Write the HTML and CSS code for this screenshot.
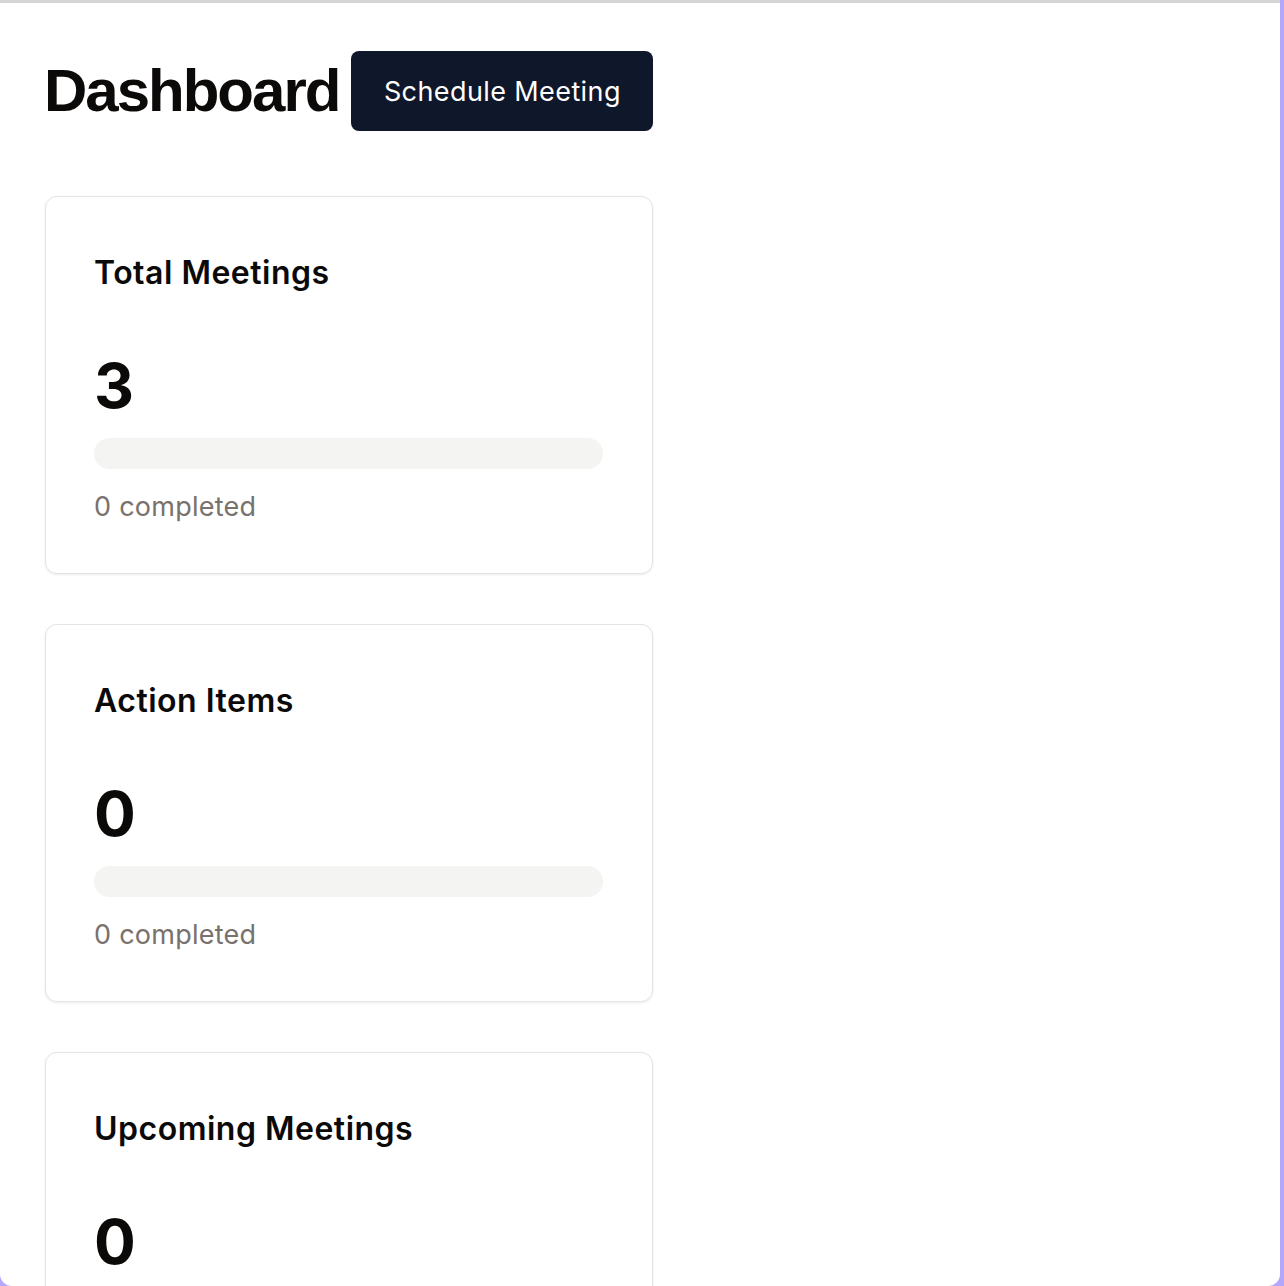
FILE: index.html
```html
<!DOCTYPE html>
<html lang="en">
<head>
<meta charset="utf-8">
<title>Dashboard</title>
<link rel="stylesheet" href="styles.css">
</head>
<body>
<div class="window">
  <main class="main">
    <header class="page-header">
      <h1 class="page-title">Dashboard</h1>
      <button class="btn-primary" type="button">Schedule Meeting</button>
    </header>
    <section class="cards">
      <div class="card">
        <h2 class="card-title">Total Meetings</h2>
        <div class="card-value">3</div>
        <div class="progress"><div class="progress-fill" style="width:0%"></div></div>
        <p class="card-note">0 completed</p>
      </div>
      <div class="card">
        <h2 class="card-title">Action Items</h2>
        <div class="card-value">0</div>
        <div class="progress"><div class="progress-fill" style="width:0%"></div></div>
        <p class="card-note">0 completed</p>
      </div>
      <div class="card">
        <h2 class="card-title">Upcoming Meetings</h2>
        <div class="card-value">0</div>
        <div class="progress"><div class="progress-fill" style="width:0%"></div></div>
        <p class="card-note">0 completed</p>
      </div>
    </section>
  </main>
</div>
</body>
</html>
```

FILE: styles.css
```css
html, body {
  margin: 0;
  padding: 0;
  background: #b3a7fb;
  height: 1286px;
  overflow: hidden;
}

.window {
  width: 1280px;
  height: 1286px;
  box-sizing: border-box;
  background: #ffffff;
  border-top: 3px solid #d5d5d5;
  border-radius: 0 0 12px 12px;
  overflow: hidden;
  font-family: Inter, "Noto Sans", sans-serif;
  color: #0c0a09;
}

.main {
  padding: 48px 45px 0 45px;
}

.page-header {
  display: flex;
  align-items: center;
  gap: 12px;
}

.page-title {
  margin: 0 0 0 -1px;
  font-family: "Liberation Sans", Arial, sans-serif;
  font-weight: 700;
  font-size: 60px;
  line-height: 80px;
  letter-spacing: -2px;
  color: #0c0a09;
}

.btn-primary {
  height: 80px;
  width: 302px;
  border: none;
  border-radius: 8px;
  background: #0f172a;
  color: #ffffff;
  font-family: Inter, "Noto Sans", sans-serif;
  font-size: 27px;
  font-weight: 400;
  padding: 0;
  letter-spacing: 0.4px;
}

.cards {
  margin-top: 65px;
  display: flex;
  flex-direction: column;
  gap: 50px;
}

.card {
  width: 608px;
  box-sizing: border-box;
  border: 1px solid #e5e4e2;
  border-radius: 12px;
  box-shadow: 0 1px 3px rgba(0, 0, 0, 0.08);
  padding: 56px 49px 50px 48px;
  background: #fff;
}

.card-title {
  margin: 0;
  font-size: 32px;
  line-height: 40px;
  font-weight: 600;
  letter-spacing: 0.5px;
  color: #0c0a09;
}

.card-value {
  margin-top: 62px;
  font-family: Inter, "Noto Sans", sans-serif;
  font-weight: 700;
  font-size: 62px;
  line-height: 62px;
  color: #0c0a09;
}

.progress {
  margin-top: 21px;
  height: 31px;
  border-radius: 16px;
  background: #f4f4f3;
  overflow: hidden;
}

.progress-fill {
  height: 100%;
  background: #1c1917;
}

.card-note {
  margin: 22px 0 0 0;
  font-size: 27px;
  line-height: 32px;
  letter-spacing: 0.25px;
  color: #78716c;
}
```
